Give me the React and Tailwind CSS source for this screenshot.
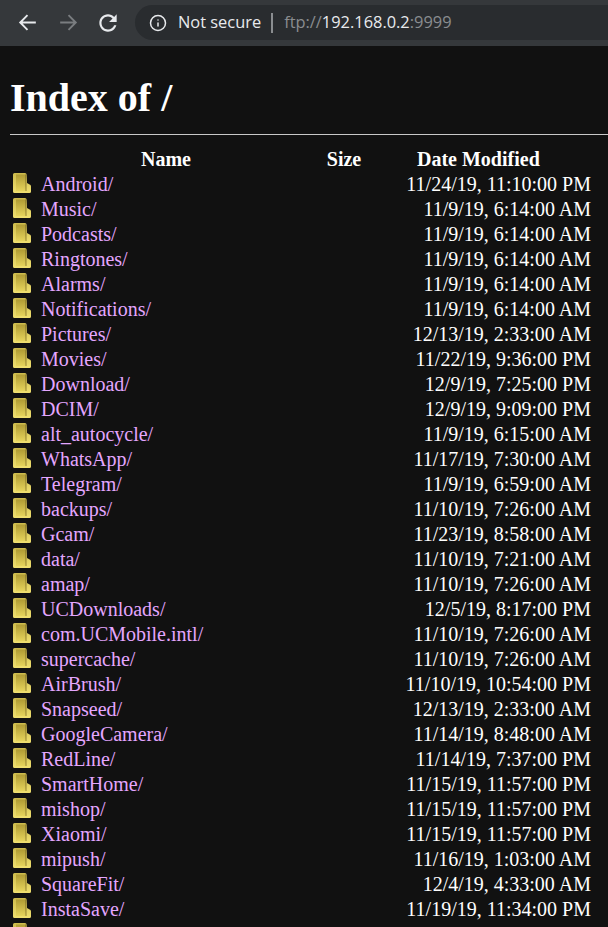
import { Info } from 'lucide-react';

const rows = [
    ['Android/', '11/24/19, 11:10:00 PM'],
    ['Music/', '11/9/19, 6:14:00 AM'],
    ['Podcasts/', '11/9/19, 6:14:00 AM'],
    ['Ringtones/', '11/9/19, 6:14:00 AM'],
    ['Alarms/', '11/9/19, 6:14:00 AM'],
    ['Notifications/', '11/9/19, 6:14:00 AM'],
    ['Pictures/', '12/13/19, 2:33:00 AM'],
    ['Movies/', '11/22/19, 9:36:00 PM'],
    ['Download/', '12/9/19, 7:25:00 PM'],
    ['DCIM/', '12/9/19, 9:09:00 PM'],
    ['alt_autocycle/', '11/9/19, 6:15:00 AM'],
    ['WhatsApp/', '11/17/19, 7:30:00 AM'],
    ['Telegram/', '11/9/19, 6:59:00 AM'],
    ['backups/', '11/10/19, 7:26:00 AM'],
    ['Gcam/', '11/23/19, 8:58:00 AM'],
    ['data/', '11/10/19, 7:21:00 AM'],
    ['amap/', '11/10/19, 7:26:00 AM'],
    ['UCDownloads/', '12/5/19, 8:17:00 PM'],
    ['com.UCMobile.intl/', '11/10/19, 7:26:00 AM'],
    ['supercache/', '11/10/19, 7:26:00 AM'],
    ['AirBrush/', '11/10/19, 10:54:00 PM'],
    ['Snapseed/', '12/13/19, 2:33:00 AM'],
    ['GoogleCamera/', '11/14/19, 8:48:00 AM'],
    ['RedLine/', '11/14/19, 7:37:00 PM'],
    ['SmartHome/', '11/15/19, 11:57:00 PM'],
    ['mishop/', '11/15/19, 11:57:00 PM'],
    ['Xiaomi/', '11/15/19, 11:57:00 PM'],
    ['mipush/', '11/16/19, 1:03:00 AM'],
    ['SquareFit/', '12/4/19, 4:33:00 AM'],
    ['InstaSave/', '11/19/19, 11:34:00 PM'],
    // next row is cut off by the window, only the icon top shows
    ['', ''],
];

function FolderIcon() {
    return (
        <svg width="18" height="20" viewBox="0 0 18 20" className="shrink-0">
            <defs>
                <linearGradient id="fold" x1="0" y1="0" x2="0" y2="1">
                    <stop offset="0" stopColor="#cdbb4c" />
                    <stop offset="1" stopColor="#f0e070" />
                </linearGradient>
                <linearGradient id="foldInner" x1="0" y1="0" x2="0" y2="1">
                    <stop offset="0" stopColor="#b09c34" />
                    <stop offset="1" stopColor="#e6d45c" />
                </linearGradient>
            </defs>
            <path d="M0 1.5 Q0 0 1.5 0 L12 0 Q13.5 0 13.6 1.5 L14 10 L17.5 12 Q18 12.5 18 13.5 L18 18.5 Q18 20 16.5 20 L1.5 20 Q0 20 0 18.5 Z" fill="url(#fold)" />
            <rect x="3" y="1.5" width="9.5" height="16.5" fill="url(#foldInner)" />
            <path d="M12 1.5 L13 1.5 L13.5 10 L13.5 18 L12.5 18 Z" fill="#94822e" />
        </svg>
    );
}

export default function App() {
    return (
        <div className="w-[608px] h-[927px] overflow-hidden bg-[#111111] text-white font-['Liberation_Serif',serif]">
            {/* browser toolbar */}
            <div className="h-[46px] bg-[#35383b] flex items-start font-['Open_Sans',sans-serif]">
                <div className="h-[46px] flex items-center pl-[15px] gap-[16px] pb-[1px]">
                    <svg width="25" height="25" viewBox="0 0 24 24" fill="none" stroke="#e8eaed" strokeWidth="1.8">
                        <path d="M20 12H5M12 5l-7 7 7 7" />
                    </svg>
                    <svg width="25" height="25" viewBox="0 0 24 24" fill="none" stroke="#7a7d80" strokeWidth="1.8">
                        <path d="M4 12h15M12 5l7 7-7 7" />
                    </svg>
                    <svg width="26" height="26" viewBox="0 0 24 24" fill="#e8eaed" className="-ml-[2px]">
                        <path d="M17.65 6.35C16.2 4.9 14.21 4 12 4c-4.42 0-7.99 3.58-7.99 8s3.57 8 7.99 8c3.73 0 6.84-2.55 7.73-6h-2.08c-.82 2.33-3.04 4-5.65 4-3.31 0-6-2.69-6-6s2.69-6 6-6c1.66 0 3.14.69 4.22 1.78L13 11h7V4l-2.35 2.35z" />
                    </svg>
                </div>
                <div className="ml-[14px] mt-[5px] flex-1 h-[35px] rounded-l-full bg-[#292c2f] flex items-center pl-[14px] text-[16.4px]">
                    <Info size={18} strokeWidth={2} className="text-[#e8eaed]" />
                    <span className="ml-[11px] text-[#e8eaed]">Not secure</span>
                    <span className="ml-[10px] w-[2px] h-[20px] bg-[#8a8d90]" />
                    <span className="ml-[11px] text-[#8a8d90]">ftp://</span>
                    <span className="text-[#e8eaed]">192.168.0.2</span>
                    <span className="text-[#8a8d90]">:9999</span>
                </div>
            </div>

            {/* listing */}
            <div className="pl-[10px]">
                <h1 className="text-[40px] font-bold leading-[42px] mt-[31px]">Index of /</h1>
                <hr className="border-[#c8c8c8] mt-[15px] mb-[12px]" />
                <table className="w-[598px] border-separate border-spacing-0 text-[20px] leading-[25px]">
                    <thead>
                        <tr className="h-[25px]">
                            <th className="w-[312px] font-bold text-center">Name</th>
                            <th className="w-[44px] font-bold text-center">Size</th>
                            <th className="font-bold text-left pl-[51px]">Date Modified</th>
                        </tr>
                    </thead>
                    <tbody>
                        {rows.map(([name, date], i) => (
                            <tr key={i} className="h-[25px]">
                                <td className="p-0">
                                    <div className="flex items-start h-[25px] pl-[3px] pt-[1px]">
                                        <FolderIcon />
                                        <span className="ml-[10px] -mt-[1px] text-[#e4a6ff]">{name}</span>
                                    </div>
                                </td>
                                <td />
                                <td className="text-right pr-[17px] whitespace-nowrap">{date}</td>
                            </tr>
                        ))}
                    </tbody>
                </table>
            </div>
        </div>
    );
}
